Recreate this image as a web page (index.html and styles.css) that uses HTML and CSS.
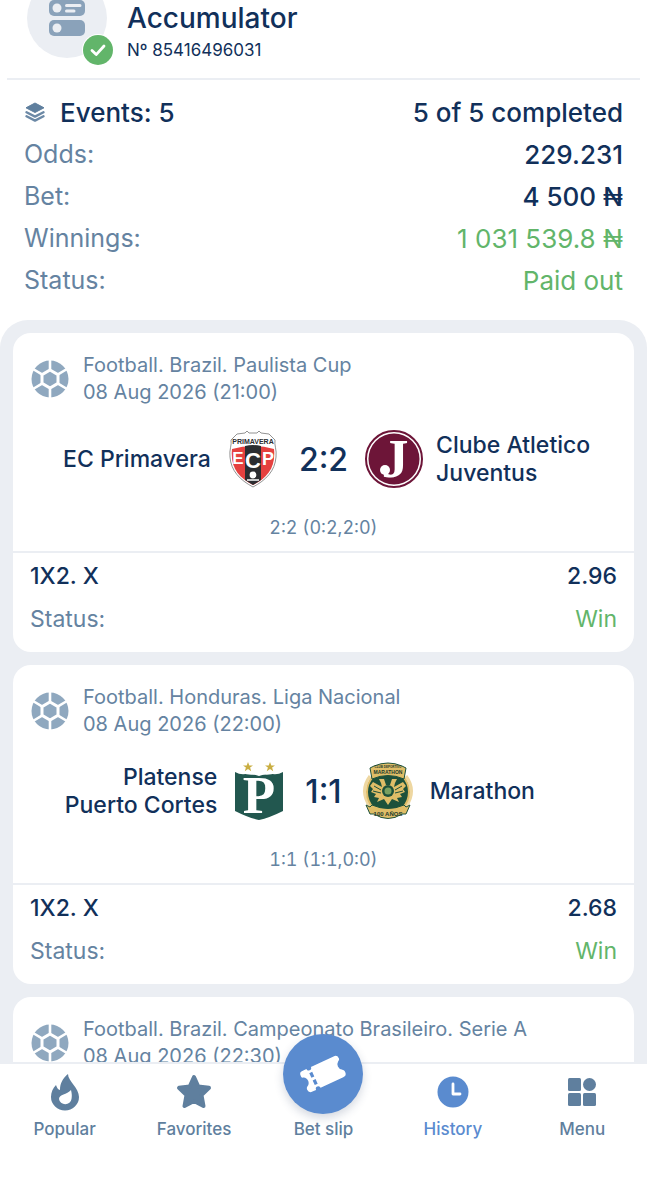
FILE: index.html
```html
<!DOCTYPE html>
<html lang="en">
<head>
    <meta charset="UTF-8">
    <meta name="viewport" content="width=device-width, initial-scale=1.0">
    <title>Accumulator</title>
    <link rel="stylesheet" href="styles.css">
</head>
<body>
    <!-- Shared icons -->
    <svg class="sprite" aria-hidden="true">
        <symbol id="ball" viewBox="0 0 38 38">
            <circle cx="19" cy="19" r="18.5" fill="#8fa8bf"/>
            <path d="M19 10 27 14.600V23.400L19 28 11 23.400V14.600Z" fill="none" stroke="#fff" stroke-width="3"/>
            <path d="M19 0V9.500M19 28.500V38M27 14.400 36 9M27 23.600 36 29M11 14.400 2 9M11 23.600 2 29" stroke="#fff" stroke-width="2.600"/>
        </symbol>
    </svg>

    <main class="page">
        <header class="header">
            <div class="avatar">
                <svg width="80" height="80" viewBox="0 0 80 80">
                    <circle cx="40" cy="40" r="40" fill="#ebeef3"/>
                    <rect x="22" y="22" width="36" height="16" rx="5" fill="#8aa2ba"/>
                    <rect x="22" y="42" width="36" height="16" rx="5" fill="#8aa2ba"/>
                    <circle cx="30" cy="30" r="4.5" fill="#ebeef3"/>
                    <circle cx="30" cy="50" r="4.5" fill="#ebeef3"/>
                    <path d="M39.500 27.500H53M39.500 33H47" stroke="#ebeef3" stroke-width="3" stroke-linecap="round"/>
                </svg>
                <svg class="badge" width="32" height="32" viewBox="0 0 32 32">
                    <circle cx="16" cy="16" r="16" fill="#fff"/>
                    <circle cx="16" cy="16" r="15" fill="#62b56a"/>
                    <path d="M10 16.500 14.200 20.600 22 12" fill="none" stroke="#fff" stroke-width="2.8" stroke-linecap="round" stroke-linejoin="round"/>
                </svg>
            </div>
            <div>
                <h1>Accumulator</h1>
                <p class="number">Nº 85416496031</p>
            </div>
        </header>

        <dl class="summary">
            <div class="row events">
                <dt>
                    <svg width="22" height="22" viewBox="0 0 22 22">
                        <path d="M11 2 20 6.800 11 11.500 2 6.800Z" fill="#5f7f9e" stroke="#5f7f9e" stroke-linejoin="round"/>
                        <path d="M2.500 11.200 11 15.600 19.500 11.200M2.500 15.200 11 19.600 19.500 15.200" fill="none" stroke="#6c89a6" stroke-width="2.400" stroke-linecap="round" stroke-linejoin="round"/>
                    </svg>
                    Events: 5
                </dt>
                <dd>5 of 5 completed</dd>
            </div>
            <div class="row"><dt>Odds:</dt><dd>229.231</dd></div>
            <div class="row"><dt>Bet:</dt><dd>4 500 ₦</dd></div>
            <div class="row"><dt>Winnings:</dt><dd class="green">1 031 539.8 ₦</dd></div>
            <div class="row"><dt>Status:</dt><dd class="green">Paid out</dd></div>
        </dl>

        <section class="list">
            <article class="card">
                <div class="card-head">
                    <svg width="38" height="38"><use href="#ball"/></svg>
                    <p>Football. Brazil. Paulista Cup<br>08 Aug 2026 (21:00)</p>
                </div>
                <div class="match">
                    <span class="team home">EC Primavera</span>
                    <svg class="logo" viewBox="0 0 58 58">
                        <path d="M13 4 21 3 23 1 25 3H33L35 1 37 3 45 4 51 10C50 15 53 20 52 27 51 41 42 50 29 57 16 50 7 41 6 27 5 20 8 15 7 10Z" fill="#fff" stroke="#777" stroke-width="0.8"/>
                        <path d="M8 19Q29 13 50 19C52 38 43 48 29 55 15 48 6 38 8 19Z" fill="#e5403f"/>
                        <path d="M21 16Q29 14 37 16V50L29 55 21 50Z" fill="#2b2d31"/>
                        <text x="29" y="14" font-family="Liberation Sans Narrow, Liberation Sans" font-size="7" font-weight="700" fill="#2b2d31" text-anchor="middle">PRIMAVERA</text>
                        <g font-family="Liberation Sans" font-weight="700" fill="#fff" text-anchor="middle">
                            <text x="14" y="34" font-size="17">E</text>
                            <text x="29" y="38" font-size="22">C</text>
                            <text x="44" y="35" font-size="18">P</text>
                        </g>
                        <circle cx="29" cy="45" r="3.4" fill="#fff"/>
                        <path d="M23 50H35" stroke="#fff" stroke-width="1.500"/>
                    </svg>
                    <span class="score">2:2</span>
                    <svg class="logo" viewBox="0 0 58 58">
                        <circle cx="29" cy="29" r="28" fill="#fff" stroke="#6d1538" stroke-width="2"/>
                        <circle cx="29" cy="29" r="25.500" fill="#6d1538"/>
                        <text x="30" y="47" font-family="Liberation Serif" font-size="54" font-weight="700" fill="#fff" text-anchor="middle">J</text>
                        <circle cx="20" cy="40" r="5" fill="#fff"/>
                    </svg>
                    <span class="team">Clube Atletico<br>Juventus</span>
                </div>
                <p class="periods">2:2 (0:2,2:0)</p>
                <dl class="bet">
                    <div class="row main"><dt>1X2. X</dt><dd>2.96</dd></div>
                    <div class="row"><dt>Status:</dt><dd class="green">Win</dd></div>
                </dl>
            </article>

            <article class="card">
                <div class="card-head">
                    <svg width="38" height="38"><use href="#ball"/></svg>
                    <p>Football. Honduras. Liga Nacional<br>08 Aug 2026 (22:00)</p>
                </div>
                <div class="match">
                    <span class="team home">Platense<br>Puerto Cortes</span>
                    <svg class="logo" viewBox="0 0 58 58">
                        <path d="M5 10Q12 14 19 11L29 14 39 11Q46 14 53 10V49Q39 56 29 58 19 56 5 49Z" fill="#22574f"/>
                        <path d="M13 11Q18 14 29 12 40 14 45 11L29 9Z" fill="#fff"/>
                        <path id="star" d="M18 0 19.300 3.400H23L20.100 5.600 21.200 9.200 18 7 14.800 9.200 15.900 5.600 13 3.400H16.700Z" fill="#c9ae42"/>
                        <use href="#star" x="22"/>
                        <text x="29" y="51" font-family="Liberation Serif" font-size="53" font-weight="700" fill="#fff" text-anchor="middle">P</text>
                    </svg>
                    <span class="score">1:1</span>
                    <svg class="logo" viewBox="0 0 58 58">
                        <path d="M11 14Q0 29 11 45M47 14Q58 29 47 45" fill="none" stroke="#eed7a1" stroke-width="3"/>
                        <ellipse cx="29" cy="30" rx="21" ry="22" fill="#1d513b" stroke="#dfbd67" stroke-width="2"/>
                        <path d="M11 6 15 4Q29-2 43 4L47 6 45 17Q29 10 13 17Z" fill="#dfbd67" stroke="#1d513b"/>
                        <path d="M7 43 11 45 13 43Q29 50 45 43L47 45 51 43 47 52 43 52Q29 61 15 52L11 52Z" fill="#dfbd67" stroke="#1d513b"/>
                        <path d="M27 23 25 17 20 17 22 21 23 25 14 20 11 24 14 27 12 30 17 32 15 35 20 36 18 40 25 37 29 43 33 37 40 40 38 36 43 35 41 32 46 30 44 27 47 24 44 20 35 25 36 21 38 17 33 17 31 23Z" fill="#dfbd67"/>
                        <circle cx="29" cy="29" r="6" fill="#1d513b"/>
                        <circle cx="29" cy="29" r="3.500" fill="#79a060"/>
                        <path d="M15 24 22 28M14 29 22 31M43 24 36 28M44 29 36 31" stroke="#1d513b"/>
                        <g font-family="Liberation Sans Narrow, Liberation Sans" font-weight="700" fill="#1d3b2c" text-anchor="middle">
                            <text x="29" y="6" font-size="3">CLUB DEPORTIVO</text>
                            <text x="29" y="12" font-size="5">MARATHON</text>
                            <text x="29" y="54" font-size="6">100 AÑOS</text>
                        </g>
                    </svg>
                    <span class="team">Marathon</span>
                </div>
                <p class="periods">1:1 (1:1,0:0)</p>
                <dl class="bet">
                    <div class="row main"><dt>1X2. X</dt><dd>2.68</dd></div>
                    <div class="row"><dt>Status:</dt><dd class="green">Win</dd></div>
                </dl>
            </article>

            <article class="card">
                <div class="card-head">
                    <svg width="38" height="38"><use href="#ball"/></svg>
                    <p>Football. Brazil. Campeonato Brasileiro. Serie A<br>08 Aug 2026 (22:30)</p>
                </div>
            </article>
        </section>
    </main>

    <nav class="tabs">
        <a href="#popular">
            <svg width="38" height="38" viewBox="0 0 38 38">
                <path d="M22 1C22 8 33 15 33 24A14 13.500 0 0 1 5 24C5 19 7 15 10 12 11 15 12 16.500 14 17 14 10 17 5 22 1Z" fill="#5f7f9e"/>
                <path d="M25 17C26 21 26 23 25.500 26A6.300 6 0 0 1 13 26C13 21 21 22 25 17Z" fill="#fff"/>
            </svg>
            Popular
        </a>
        <a href="#favorites">
            <svg width="38" height="38" viewBox="0 0 38 38">
                <path d="M19 4 23.300 13.500 34 14.800 26.500 22.200 28.500 33 19 28 9.500 33 11.500 22.200 4 14.800 14.700 13.500Z" fill="#5f7f9e" stroke="#5f7f9e" stroke-width="4" stroke-linejoin="round"/>
            </svg>
            Favorites
        </a>
        <a href="#slip">
            <span class="slip">
                <svg width="50" height="50" viewBox="0 0 50 50">
                    <g transform="rotate(-25 25 25)">
                        <path d="M7 13.500H12A2.500 2.500 0 0 0 17 13.500H42Q46 13.500 46 17.500C46 19 45 19.500 44 20A5.500 5.500 0 0 0 44 29C45 30 46 31 46 32.500Q46 36.500 42 36.500H17A2.500 2.500 0 0 0 12 36.500H8Q4 36.500 4 32.500C4 31 5 30 6 29.500A5.500 5.500 0 0 0 6 20C4 19.500 4 19 4 17.500Q4 13.500 7 13.500Z" fill="#fff"/>
                        <path d="M14.500 18.500V32" stroke="#5a8bcf" stroke-width="3.200" stroke-dasharray="5 3"/>
                    </g>
                </svg>
            </span>
            Bet slip
        </a>
        <a class="active" href="#history">
            <svg width="38" height="38" viewBox="0 0 38 38">
                <circle cx="19" cy="19" r="15.500" fill="#5a8bcf"/>
                <path d="M19 11V21H26" fill="none" stroke="#fff" stroke-width="2.800" stroke-linecap="round" stroke-linejoin="round"/>
            </svg>
            History
        </a>
        <a href="#menu">
            <svg width="38" height="38" viewBox="0 0 38 38" fill="#5f7f9e">
                <rect x="5" y="5" width="13" height="13" rx="1.500"/>
                <circle cx="26.500" cy="11.500" r="6.500"/>
                <rect x="5" y="20" width="13" height="13" rx="1.500"/>
                <rect x="20" y="20" width="13" height="13" rx="1.500"/>
            </svg>
            Menu
        </a>
    </nav>
</body>
</html>
```
FILE: styles.css
```css
* {
    box-sizing: border-box;
}
body {
    margin: 0;
    height: 100vh;
    display: flex;
    flex-direction: column;
    overflow: hidden;
    font-family: Inter, "Liberation Sans", sans-serif;
    color: #11305a;
    background-color: #fff;
}
h1, p, dl, dt, dd {
    margin: 0;
}
.sprite {
    position: absolute;
    width: 0;
    height: 0;
}
svg {
    display: block;
    flex-shrink: 0;
}
.page {
    flex: 1;
    min-height: 0;
    overflow: hidden;
    display: flex;
    flex-direction: column;
}

/* Header */
.header {
    display: flex;
    gap: 20px;
    height: 80px;
    flex-shrink: 0;
    margin: 0 7px;
    padding: 0 20px;
    border-bottom: 2px solid #ebeef3;
}
.avatar {
    position: relative;
    width: 80px;
    height: 80px;
    margin-top: -22px;
}
.badge {
    position: absolute;
    right: -7px;
    bottom: -8px;
}
h1 {
    font-size: 28px;
    line-height: 36px;
    font-weight: 500;
}
.number {
    font-size: 17px;
    line-height: 28px;
}

/* Label and value rows */
.row {
    display: flex;
    justify-content: space-between;
    align-items: center;
    height: 42px;
}
dt {
    color: #6583a1;
}
.summary {
    padding: 11px 24px 19px;
    font-size: 25px;
}
.summary dd {
    font-size: 26px;
    font-weight: 500;
}
.events dt {
    display: flex;
    align-items: center;
    gap: 14px;
    color: #11305a;
    font-size: 26px;
    font-weight: 500;
}
.row .green {
    color: #62b56a;
    font-weight: 400;
}

/* Event cards */
.list {
    flex: 1;
    display: flex;
    flex-direction: column;
    gap: 13px;
    padding: 13px;
    border-radius: 28px 28px 0 0;
    background-color: #ebeef3;
}
.card {
    flex-shrink: 0;
    padding: 19px 0 12px;
    border-radius: 18px;
    background-color: #fff;
}
.card-head {
    display: flex;
    align-items: center;
    gap: 14px;
    padding: 0 18px;
    color: #6583a1;
    font-size: 20px;
    line-height: 27px;
}
.match {
    display: grid;
    grid-template-columns: 1fr 58px auto 58px 1fr;
    align-items: center;
    gap: 17px;
    padding-top: 24px;
}
.logo {
    width: 58px;
    height: 58px;
    overflow: visible;
}
.team {
    margin-left: -4px;
    font-size: 23px;
    line-height: 28px;
    font-weight: 500;
}
.home {
    margin-left: 0;
    margin-right: -4px;
    text-align: right;
}
.score {
    font-size: 32px;
    font-weight: 500;
}
.periods {
    padding: 26px 0 10px;
    color: #6583a1;
    font-size: 18px;
    line-height: 27px;
    font-variant-numeric: tabular-nums;
    text-align: center;
}
.bet {
    padding: 1px 17px 0;
    border-top: 2px solid #ebeef3;
    font-size: 23px;
}
.bet .row {
    height: 43px;
}
.main dt, .main dd {
    color: #11305a;
    font-weight: 500;
}

/* Bottom navigation */
.tabs {
    position: relative;
    display: grid;
    grid-template-columns: repeat(5, 1fr);
    height: 138px;
    border-top: 2px solid #ebeef3;
    background-color: #fff;
}
.tabs a {
    display: flex;
    flex-direction: column;
    align-items: center;
    gap: 6px;
    padding-top: 9px;
    color: #5f7f9e;
    font-size: 17px;
    line-height: 24px;
    font-weight: 500;
    text-decoration: none;
}
.tabs .active {
    color: #5a8bcf;
}
.slip {
    display: flex;
    align-items: center;
    justify-content: center;
    width: 80px;
    height: 80px;
    margin-top: -39px;
    margin-bottom: -3px;
    border-radius: 50%;
    background-color: #5a8bcf;
    box-shadow: 0 4px 10px rgba(40, 60, 100, 0.2);
}
```
